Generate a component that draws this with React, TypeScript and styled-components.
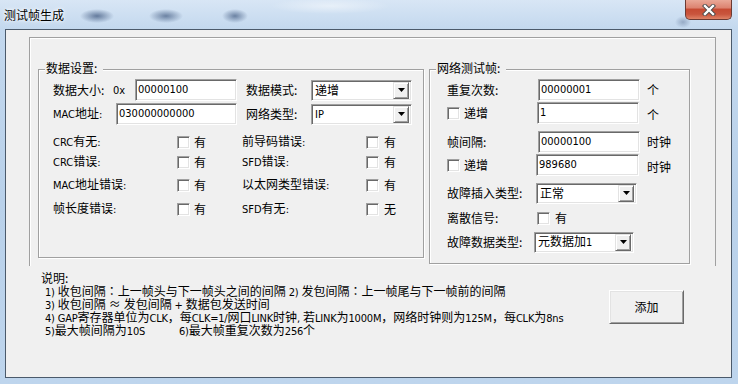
import styled, { createGlobalStyle } from "styled-components";

const GlobalStyle = createGlobalStyle`
  html, body {
    margin: 0;
    padding: 0;
    background: #bcd3eb;
  }
  body {
    font-family: "Noto Sans CJK SC", sans-serif;
  }
`;

// window frame //
const Window = styled.div`
  width: 738px;
  height: 384px;
  display: flex;
  flex-direction: column;
  background:
    radial-gradient(17px 7px at 97px 16px, rgba(55, 80, 120, 0.7), rgba(55, 80, 120, 0)),
    radial-gradient(17px 7px at 166px 16px, rgba(55, 80, 120, 0.65), rgba(55, 80, 120, 0)),
    radial-gradient(13px 7px at 235px 16px, rgba(55, 80, 120, 0.65), rgba(55, 80, 120, 0)),
    radial-gradient(8px 6px at 683px 22px, rgba(55, 80, 120, 0.35), rgba(55, 80, 120, 0)),
    radial-gradient(60px 8px at 330px 6px, rgba(255, 255, 255, 0.45), rgba(255, 255, 255, 0)),
    linear-gradient(to bottom, #d8e6f5 0px, #c3d8ee 29px, #b9d1ea 200px, #bed5ed 384px);
`;
const TitleBar = styled.div`
  height: 29px;
  flex-shrink: 0;
  display: flex;
  align-items: flex-start;
`;
const Title = styled.div`
  margin: 8px 0 0 4px;
  font-size: 12px;
  line-height: 14px;
  color: #000;
  text-shadow: 0 0 5px #fff, 0 0 3px #fff;
`;
const CloseButton = styled.div`
  margin-left: auto;
  margin-right: 6px;
  width: 47px;
  height: 20px;
  box-sizing: border-box;
  border: 1px solid #6b3a33;
  border-top: none;
  border-radius: 0 0 5px 5px;
  background: linear-gradient(
    to bottom,
    #e9a897 0%,
    #dd8471 40%,
    #c64b33 50%,
    #c9553d 75%,
    #df8266 100%
  );
  display: flex;
  align-items: center;
  justify-content: center;
`;

// client area //
const Client = styled.div`
  margin: 0 6px 0 5px;
  height: 349px;
  box-sizing: border-box;
  border: 1px solid #4b5a6b;
  background: #f0f0f0;
  color: #000;
  font-family: "Noto Sans CJK SC", sans-serif;
  font-size: 12px;
  line-height: 14px;
`;
const OuterFrame = styled.div`
  margin: 7px 0 0 23px;
  width: 687px;
  height: 229px;
  box-sizing: border-box;
  border: 1px solid #a0a0a0;
  border-bottom: none;
  box-shadow: inset 1px 1px 0 #fff;
  padding: 31px 0 0 8px;
  display: flex;
  align-items: flex-start;
  gap: 5px;
`;
const Group = styled.div<{ $w: number; $h: number; $pl: number }>`
  position: relative;
  width: ${(p) => p.$w}px;
  height: ${(p) => p.$h}px;
  box-sizing: border-box;
  border: 1px solid #a0a0a0;
  box-shadow: inset 1px 1px 0 #fff, 1px 1px 0 #fff;
  padding: 9px 0 0 ${(p) => p.$pl}px;
`;
const Legend = styled.div`
  position: absolute;
  top: -9px;
  left: 6px;
  padding: 0 6px 0 1px;
  background: #f0f0f0;
  line-height: 14px;
`;
const Row = styled.div<{ $mt?: number; $h?: number }>`
  display: flex;
  align-items: center;
  height: ${(p) => p.$h ?? 22}px;
  margin-top: ${(p) => p.$mt ?? 0}px;
`;
const Cell = styled.div<{ $w: number }>`
  width: ${(p) => p.$w}px;
  flex-shrink: 0;
  display: flex;
  align-items: center;
`;
const Label = styled.span<{ $w: number }>`
  width: ${(p) => p.$w}px;
  flex-shrink: 0;
  white-space: nowrap;
`;
const Latin = styled.span`
  font-family: "DejaVu Sans Condensed", "Liberation Sans", sans-serif;
  font-size: 11px;
`;
const Punct = styled.span`
  font-family: "Noto Sans CJK JP", sans-serif;
`;
const Unit = styled.span<{ $ml: number; $dy?: number }>`
  margin-left: ${(p) => p.$ml}px;
  position: relative;
  top: ${(p) => p.$dy ?? 0}px;
  white-space: nowrap;
`;

// controls //
const Edit = styled.div<{ $w: number }>`
  width: ${(p) => p.$w}px;
  height: 22px;
  flex-shrink: 0;
  box-sizing: border-box;
  background: #fff;
  border: 1px solid;
  border-color: #a0a0a0 #fff #fff #a0a0a0;
  box-shadow: inset 1px 1px 0 #696969, inset -1px -1px 0 #e3e3e3;
  padding-left: 2px;
  display: flex;
  align-items: center;
  font-family: "DejaVu Sans Condensed", "Liberation Sans", sans-serif;
  font-size: 11px;
`;
const Combo = styled.div<{ $w: number }>`
  width: ${(p) => p.$w}px;
  height: 21px;
  flex-shrink: 0;
  box-sizing: border-box;
  background: #fff;
  border: 1px solid;
  border-color: #a0a0a0 #fff #fff #a0a0a0;
  box-shadow: inset 1px 1px 0 #696969, inset -1px -1px 0 #e3e3e3;
  padding: 2px;
  display: flex;
  align-items: center;
`;
const ComboText = styled.span`
  flex: 1;
  padding-left: 1px;
  white-space: nowrap;
`;
const ComboButton = styled.span`
  width: 16px;
  height: 17px;
  box-sizing: border-box;
  background: #f0f0f0;
  border: 1px solid;
  border-color: #e3e3e3 #696969 #696969 #e3e3e3;
  box-shadow: inset 1px 1px 0 #fff, inset -1px -1px 0 #a0a0a0;
  display: flex;
  align-items: center;
  justify-content: center;
`;
const Check = styled.span<{ $mr?: number }>`
  width: 13px;
  height: 13px;
  flex-shrink: 0;
  box-sizing: border-box;
  background: #fff;
  border: 1px solid;
  border-color: #a0a0a0 #fff #fff #a0a0a0;
  box-shadow: inset 1px 1px 0 #696969, inset -1px -1px 0 #e3e3e3;
  margin-right: ${(p) => p.$mr ?? 4}px;
`;
const PushButton = styled.div`
  width: 75px;
  height: 34px;
  flex-shrink: 0;
  box-sizing: border-box;
  margin-top: 24px;
  background: #f0f0f0;
  border: 1px solid;
  border-color: #fff #696969 #696969 #fff;
  box-shadow: inset 1px 1px 0 #e3e3e3, inset -1px -1px 0 #a0a0a0;
  display: flex;
  align-items: center;
  justify-content: center;
`;

// notes //
const Bottom = styled.div`
  display: flex;
  align-items: flex-start;
  margin-left: 35px;
`;
const Notes = styled.div`
  width: 568px;
  padding-top: 5px;
  line-height: 13px;
  white-space: pre;

  ${Latin} {
    letter-spacing: -0.2px;
  }
`;
const NoteLine = styled.div<{ $pl?: number }>`
  padding-left: ${(p) => p.$pl ?? 4}px;
  height: 13px;
`;
const NoteCol = styled.span<{ $w: number }>`
  display: inline-block;
  width: ${(p) => p.$w}px;
`;

const mix = (s: string) =>
  s
    .split(/([\x20-\x7e]+|：)/)
    .filter((part) => part.length > 0)
    .map((part, i) => {
      if (part === "：") return <Punct key={i}>{part}</Punct>;
      if (/^[\x20-\x7e]+$/.test(part)) return <Latin key={i}>{part}</Latin>;
      return <span key={i}>{part}</span>;
    });

const Arrow = () => (
  <svg width="7" height="4" viewBox="0 0 7 4">
    <polygon points="0,0 7,0 3.5,4" fill="#000" />
  </svg>
);

const Select = ({ w, value }: { w: number; value: string }) => (
  <Combo $w={w}>
    <ComboText>{mix(value)}</ComboText>
    <ComboButton>
      <Arrow />
    </ComboButton>
  </Combo>
);

const CheckRow = ({
  mt,
  left,
  leftVal,
  right,
  rightVal,
}: {
  mt: number;
  left: string;
  leftVal: string;
  right: string;
  rightVal: string;
}) => (
  <Row $mt={mt} $h={20}>
    <Cell $w={189}>
      <Label $w={124}>{mix(left)}</Label>
      <Check />
      <span>{leftVal}</span>
    </Cell>
    <Label $w={124}>{mix(right)}</Label>
    <Check $mr={5} />
    <span>{rightVal}</span>
  </Row>
);

const App = () => {
  return (
    <>
      <GlobalStyle />
      <Window>
        <TitleBar>
          <Title>测试帧生成</Title>
          <CloseButton>
            <svg width="14" height="12" viewBox="0 0 14 12">
              <path d="M3 2 L11 10 M11 2 L3 10" stroke="#4a4a4a" strokeWidth="4.2" strokeLinecap="square" />
              <path d="M3 2 L11 10 M11 2 L3 10" stroke="#fff" strokeWidth="2.4" strokeLinecap="square" />
            </svg>
          </CloseButton>
        </TitleBar>
        <Client>
          <OuterFrame>
            {/* data settings */}
            <Group $w={386} $h={189} $pl={14}>
              <Legend>数据设置:</Legend>
              <Row>
                <Cell $w={193}>
                  <Label $w={60}>数据大小:</Label>
                  <Label $w={22}>
                    <Latin>0x</Latin>
                  </Label>
                  <Edit $w={102}>00000100</Edit>
                </Cell>
                <Label $w={65}>数据模式:</Label>
                <Select w={101} value="递增" />
              </Row>
              <Row $mt={2}>
                <Cell $w={193}>
                  <Label $w={63}>{mix("MAC地址:")}</Label>
                  <Edit $w={121}>030000000000</Edit>
                </Cell>
                <Label $w={65}>网络类型:</Label>
                <Select w={101} value="IP" />
              </Row>
              <CheckRow mt={7} left="CRC有无:" leftVal="有" right="前导码错误:" rightVal="有" />
              <CheckRow mt={0} left="CRC错误:" leftVal="有" right="SFD错误:" rightVal="有" />
              <CheckRow mt={3} left="MAC地址错误:" leftVal="有" right="以太网类型错误:" rightVal="有" />
              <CheckRow mt={4} left="帧长度错误:" leftVal="有" right="SFD有无:" rightVal="无" />
            </Group>
            {/* network test frame */}
            <Group $w={261} $h={195} $pl={17}>
              <Legend>网络测试帧:</Legend>
              <Row>
                <Label $w={91}>重复次数:</Label>
                <Edit $w={102}>00000001</Edit>
                <Unit $ml={7}>个</Unit>
              </Row>
              <Row $mt={1}>
                <Cell $w={90}>
                  <Check />
                  <span>递增</span>
                </Cell>
                <Edit $w={102}>1</Edit>
                <Unit $ml={8} $dy={2}>个</Unit>
              </Row>
              <Row $mt={7}>
                <Label $w={91}>帧间隔:</Label>
                <Edit $w={102}>00000100</Edit>
                <Unit $ml={7}>时钟</Unit>
              </Row>
              <Row $mt={1}>
                <Cell $w={89}>
                  <Check />
                  <span>递增</span>
                </Cell>
                <Edit $w={103}>989680</Edit>
                <Unit $ml={8} $dy={2}>时钟</Unit>
              </Row>
              <Row $mt={6}>
                <Label $w={89}>故障插入类型:</Label>
                <Select w={101} value="正常" />
              </Row>
              <Row $mt={3}>
                <Label $w={90}>离散信号:</Label>
                <Check $mr={5} />
                <span>有</span>
              </Row>
              <Row $mt={2}>
                <Label $w={87}>故障数据类型:</Label>
                <Select w={100} value="元数据加1" />
              </Row>
            </Group>
          </OuterFrame>
          <Bottom>
            <Notes>
              <NoteLine $pl={0}>说明:</NoteLine>
              <NoteLine>{mix("1) 收包间隔：上一帧头与下一帧头之间的间隔 2) 发包间隔：上一帧尾与下一帧前的间隔")}</NoteLine>
              <NoteLine>{mix("3) 收包间隔 ≈ 发包间隔 + 数据包发送时间")}</NoteLine>
              <NoteLine>
                {mix("4) GAP寄存器单位为CLK，每CLK=1/网口LINK时钟, 若LINK为1000M，网络时钟则为125M，每CLK为8ns")}
              </NoteLine>
              <NoteLine>
                <NoteCol $w={134}>{mix("5)最大帧间隔为10S")}</NoteCol>
                {mix("6)最大帧重复次数为256个")}
              </NoteLine>
            </Notes>
            <PushButton>添加</PushButton>
          </Bottom>
        </Client>
      </Window>
    </>
  );
};

export default App;
